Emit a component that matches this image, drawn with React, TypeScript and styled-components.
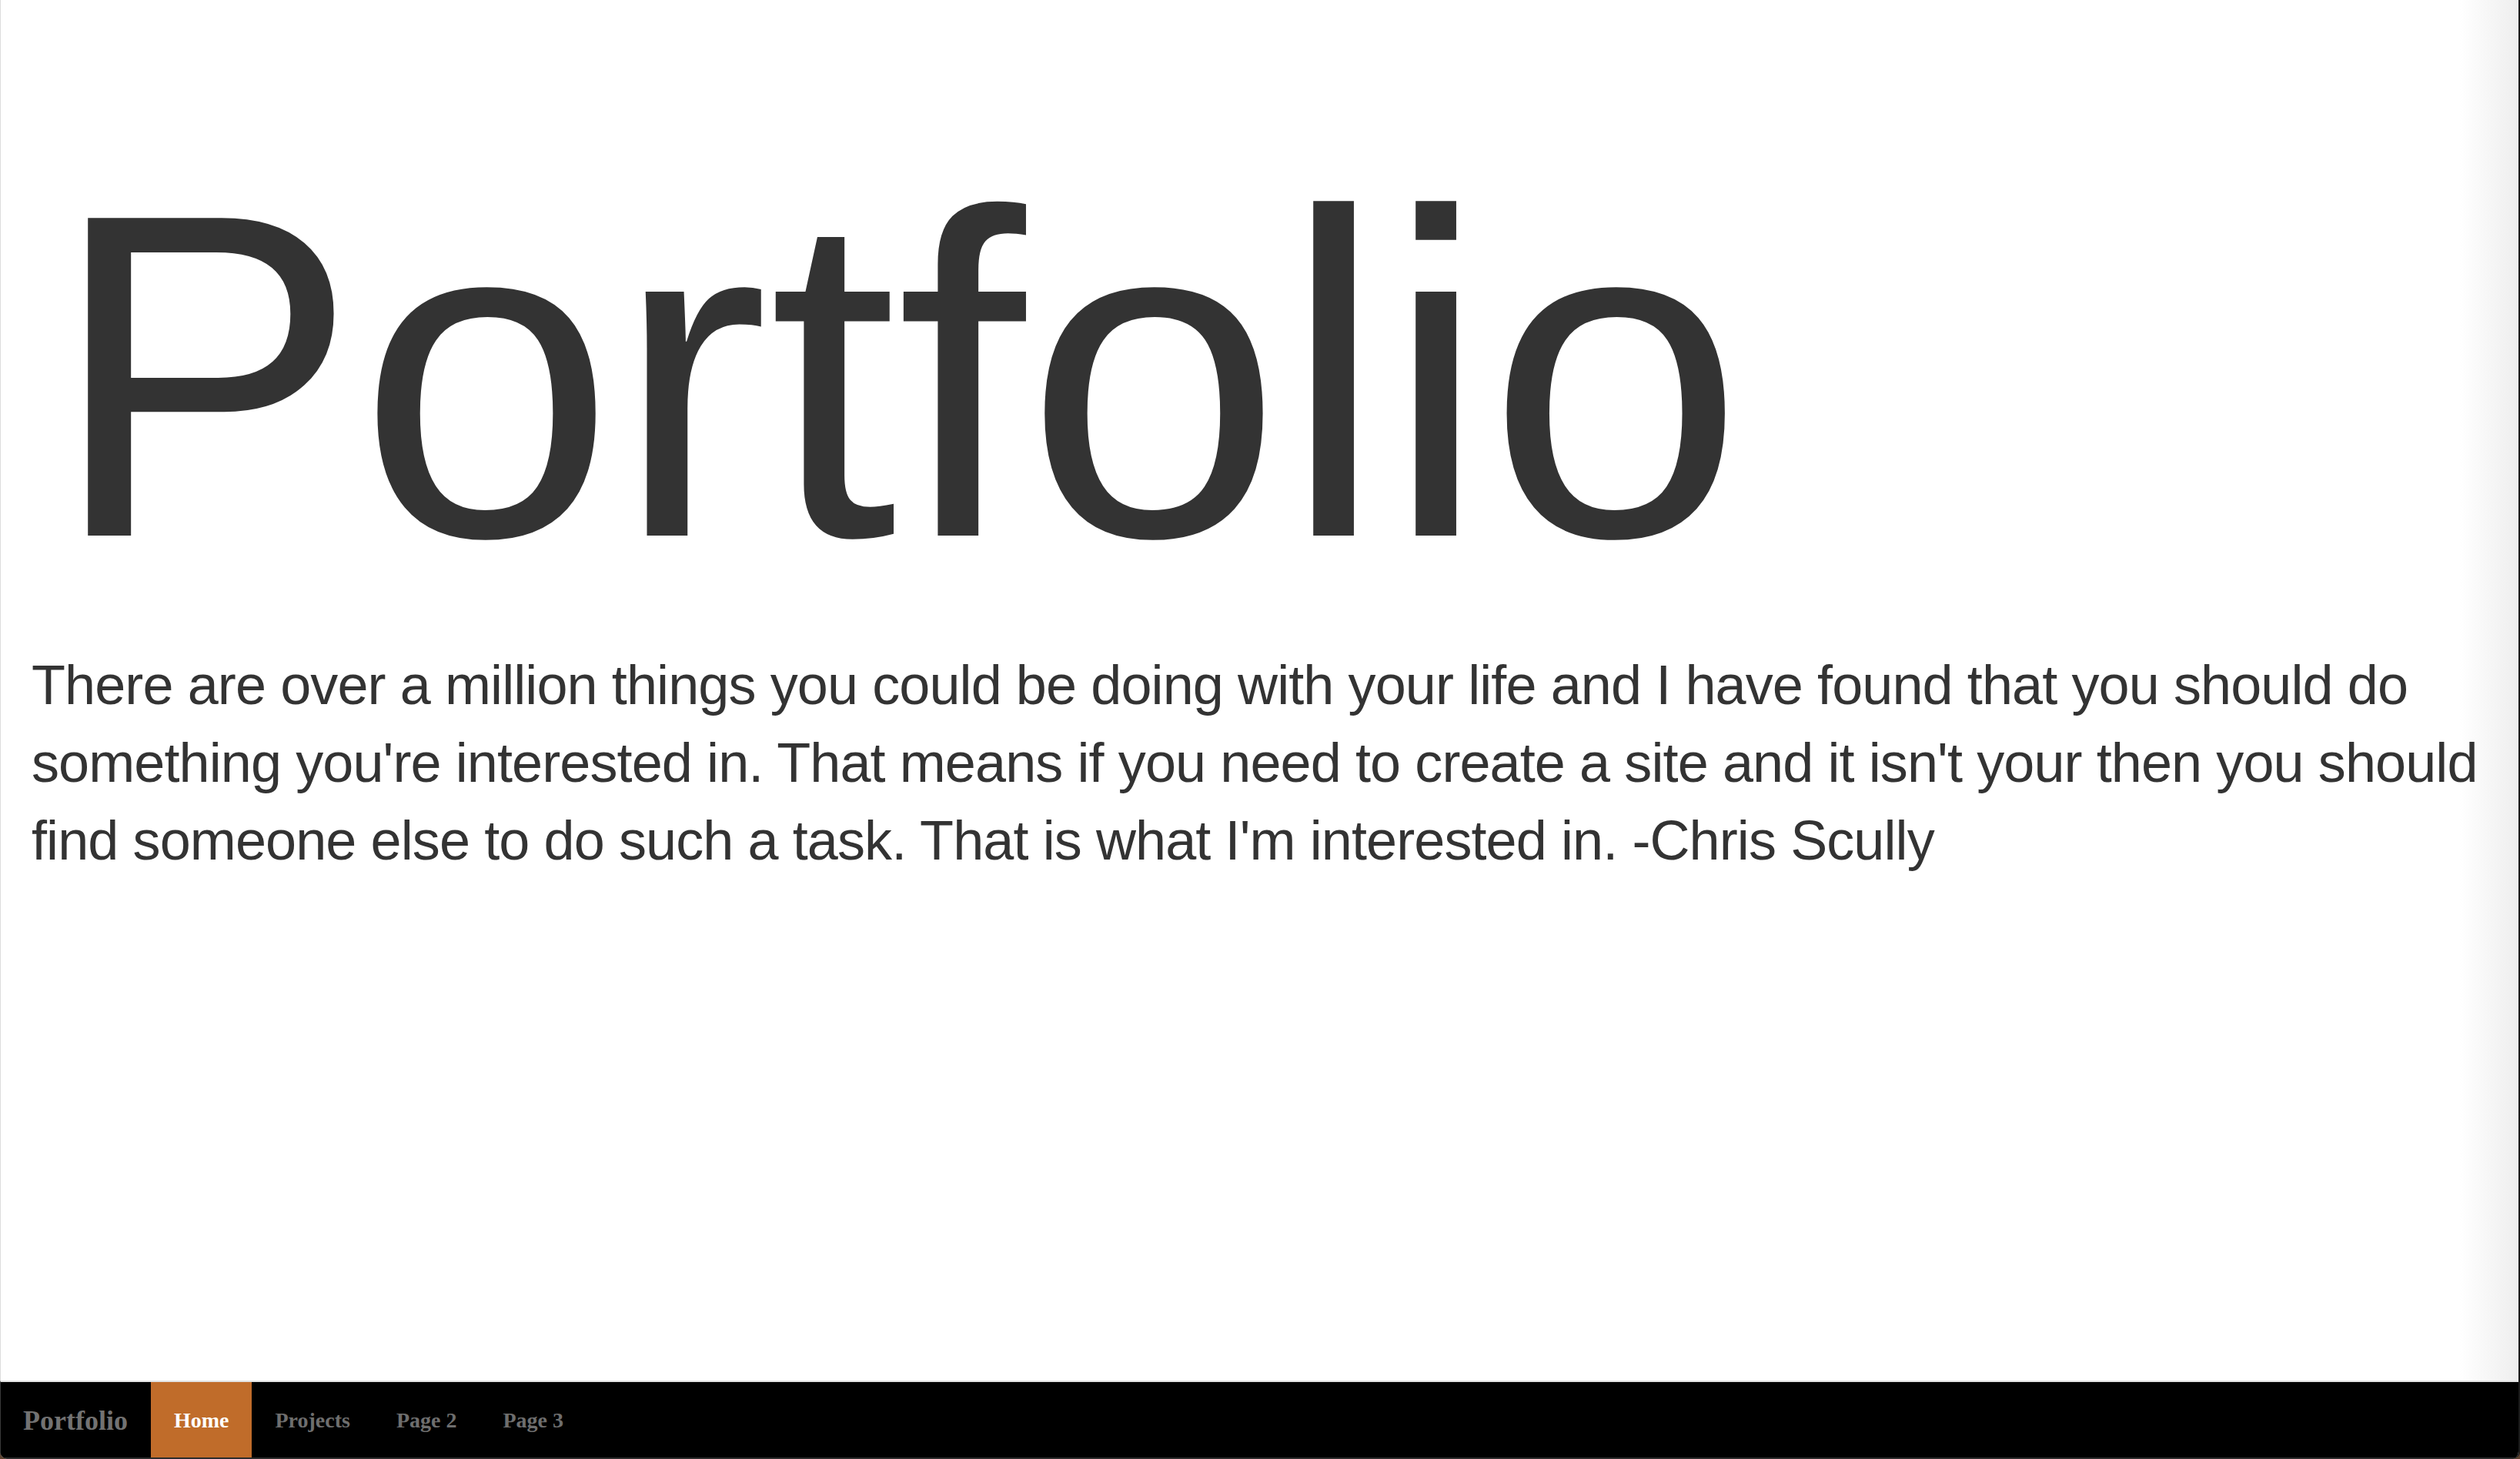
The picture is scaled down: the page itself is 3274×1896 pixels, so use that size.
import React from "react";
import styled, { createGlobalStyle } from "styled-components";

const GlobalStyle = createGlobalStyle`
  html, body {
    margin: 0;
    padding: 0;
    background: #5e4330;
  }
  * { box-sizing: border-box; }
`;

const Window = styled.div`
  display: flex;
  flex-direction: column;
  height: 100vh;
  overflow: hidden;
  border-right: 2px solid #1b1b1b;
  border-bottom-left-radius: 10px;
  border-bottom-right-radius: 10px;
  background: linear-gradient(to right, #ffffff calc(100% - 76px), #eeeeee 100%);
  font-family: "Liberation Sans", Arial, Helvetica, sans-serif;
  color: #333333;
`;

const Main = styled.main`
  flex: 1;
  padding: 188px 20px 0 40px;
  border-left: 1px solid #dcdcdc;
`;

const Title = styled.h1`
  margin: 0;
  padding-left: 24px;
  font-family: "Liberation Sans", Arial, Helvetica, sans-serif;
  font-weight: 400;
  font-size: 600px;
  line-height: 600px;
  color: #333333;
  white-space: nowrap;
`;

const Lead = styled.p`
  margin: 52px 0 0 0;
  font-size: 72px;
  line-height: 1.4;
  letter-spacing: -0.9px;
  color: #333333;
`;

const Nav = styled.nav`
  display: flex;
  align-items: stretch;
  background: #000000;
  border-top: 2px solid #e3e3e3;
  border-left: 1px solid #3a3a3a;
  border-bottom: 2px solid #2c2c2c;
  font-family: "Liberation Serif", "Times New Roman", serif;
  font-weight: 700;
`;

const Brand = styled.a`
  display: block;
  padding: 30px 30px 28px 29px;
  font-size: 36px;
  line-height: 40px;
  color: #727272;
  text-decoration: none;
`;

const NavItem = styled.a<{ $active?: boolean }>`
  display: block;
  padding: 30px 30px 28px 30px;
  font-size: 28px;
  line-height: 40px;
  color: ${(p) => (p.$active ? "#ffffff" : "#6e6e6e")};
  background: ${(p) => (p.$active ? "#c06c2a" : "transparent")};
  text-decoration: none;
`;

const links = [
  { label: "Home", active: true },
  { label: "Projects", active: false },
  { label: "Page 2", active: false },
  { label: "Page 3", active: false },
];

export default function App() {
  return (
    <>
      <GlobalStyle />
      <Window>
        <Main>
          <Title>Portfolio</Title>
          <Lead>
            There are over a million things you could be doing with your life and I have
            found that you should do something you're interested in. That means if you need
            to create a site and it isn't your then you should find someone else to do such
            a task. That is what I'm interested in. -Chris Scully
          </Lead>
        </Main>
        <Nav>
          <Brand href="#">Portfolio</Brand>
          {links.map((l) => (
            <NavItem key={l.label} href="#" $active={l.active}>
              {l.label}
            </NavItem>
          ))}
        </Nav>
      </Window>
    </>
  );
}
